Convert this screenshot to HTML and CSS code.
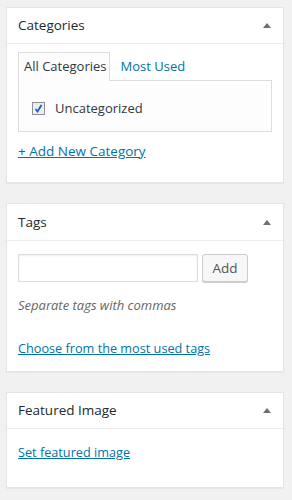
FILE: index.html
```html
<!DOCTYPE html>
<html lang="en">
<head>
    <meta charset="UTF-8">
    <title>Post sidebar</title>
    <link rel="stylesheet" href="styles.css">
</head>
<body>
    <div class="sidebar">
        <div class="postbox">
            <h2 class="hndle">
                <span>Categories</span>
                <svg class="toggle" width="8" height="5" viewBox="0 0 8 5"><polygon points="0,5 8,5 4,0"/></svg>
            </h2>
            <div class="inside">
                <ul class="tabs">
                    <li class="tab active">All Categories</li>
                    <li class="tab"><a href="#">Most Used</a></li>
                </ul>
                <div class="tabs-panel">
                    <label class="cat-row">
                        <span class="check">
                            <svg width="11" height="11" viewBox="0 0 11 11"><path d="M2.5 6 L4.5 8.5 L8.5 2" fill="none" stroke="#1e5bc6" stroke-width="1.8"/></svg>
                        </span>
                        Uncategorized
                    </label>
                </div>
                <a class="add-link" href="#">+ Add New Category</a>
            </div>
        </div>

        <div class="postbox">
            <h2 class="hndle tall">
                <span>Tags</span>
                <svg class="toggle" width="8" height="5" viewBox="0 0 8 5"><polygon points="0,5 8,5 4,0"/></svg>
            </h2>
            <div class="inside tags-inside">
                <div class="tag-add">
                    <input type="text" class="tag-input">
                    <button class="button">Add</button>
                </div>
                <p class="howto">Separate tags with commas</p>
                <a class="tag-link" href="#">Choose from the most used tags</a>
            </div>
        </div>

        <div class="postbox">
            <h2 class="hndle">
                <span>Featured Image</span>
                <svg class="toggle" width="8" height="5" viewBox="0 0 8 5"><polygon points="0,5 8,5 4,0"/></svg>
            </h2>
            <div class="inside image-inside">
                <a class="image-link" href="#">Set featured image</a>
            </div>
        </div>
    </div>
</body>
</html>
```

FILE: styles.css
```css
body {
    margin: 0;
    padding: 0;
    background-color: #f1f1f1;
    font-family: 'Open Sans', 'Liberation Sans', sans-serif;
    font-size: 13px;
    line-height: 18px;
    color: #32373c;
}

a {
    color: #0073aa;
}

.sidebar {
    width: 278px;
    padding: 7px 0 0 6px;
}

/* each collapsible box */
.postbox {
    background-color: #fff;
    border: 1px solid #e5e5e5;
    box-shadow: 0 1px 1px rgba(0, 0, 0, 0.04);
    margin-bottom: 20px;
}

.hndle {
    display: flex;
    justify-content: space-between;
    align-items: center;
    margin: 0;
    padding: 8px 12px 8px 11px;
    font-size: 13.5px;
    font-weight: 400;
    line-height: 19px;
    color: #23282d;
    border-bottom: 1px solid #eee;
}

.hndle.tall {
    padding-top: 9px;
}

.toggle {
    fill: #6b7076;
}

.inside {
    padding: 8px 11px 22px 11px;
}

/* category tabs */
.tabs {
    display: flex;
    list-style: none;
    margin: 0;
    padding: 0;
}

.tab {
    height: 27px;
    padding: 0 4px 0 5px;
    line-height: 27px;
    border: 1px solid transparent;
    border-bottom: none;
}

.tab.active {
    background-color: #fdfdfd;
    border-color: #ddd;
    margin-bottom: -1px;
    position: relative;
    height: 28px;
    padding-right: 3px;
}

.tab a {
    text-decoration: none;
    padding-left: 4px;
}

.tabs-panel {
    padding: 16px 0 0 13px;
    box-sizing: border-box;
    height: 52px;
    border: 1px solid #ddd;
    background-color: #fdfdfd;
}

.cat-row {
    display: flex;
    align-items: center;
    height: 22px;
    gap: 10px;
}

.check {
    width: 11px;
    height: 11px;
    border: 1px solid #8f9296;
    background-color: #eceef2;
    display: flex;
}

.add-link {
    display: block;
    margin-top: 10px;
    width: max-content;
    font-size: 13.5px;
}

/* tags box */
.tags-inside {
    padding: 13px 11px 14px 11px;
}

.tag-add {
    display: flex;
    gap: 4px;
}

.tag-input {
    width: 180px;
    height: 28px;
    box-sizing: border-box;
    margin: 0;
    border: 1px solid #ddd;
    box-shadow: inset 0 1px 2px rgba(0, 0, 0, 0.07);
}

.button {
    width: 46px;
    height: 28px;
    margin: 0;
    padding: 0;
    font-family: inherit;
    font-size: 13.5px;
    color: #555;
    background-color: #f7f7f7;
    border: 1px solid #ccc;
    border-radius: 3px;
    box-shadow: 0 1px 0 #ccc;
}

.howto {
    margin: 14px 0 0 0;
    font-style: italic;
    color: #666;
}

.tag-link {
    display: block;
    margin-top: 25px;
    width: max-content;
    font-size: 12.7px;
}

.image-inside {
    padding: 14px 11px 26px 11px;
}

.image-link {
    font-size: 12.7px;
}
```
